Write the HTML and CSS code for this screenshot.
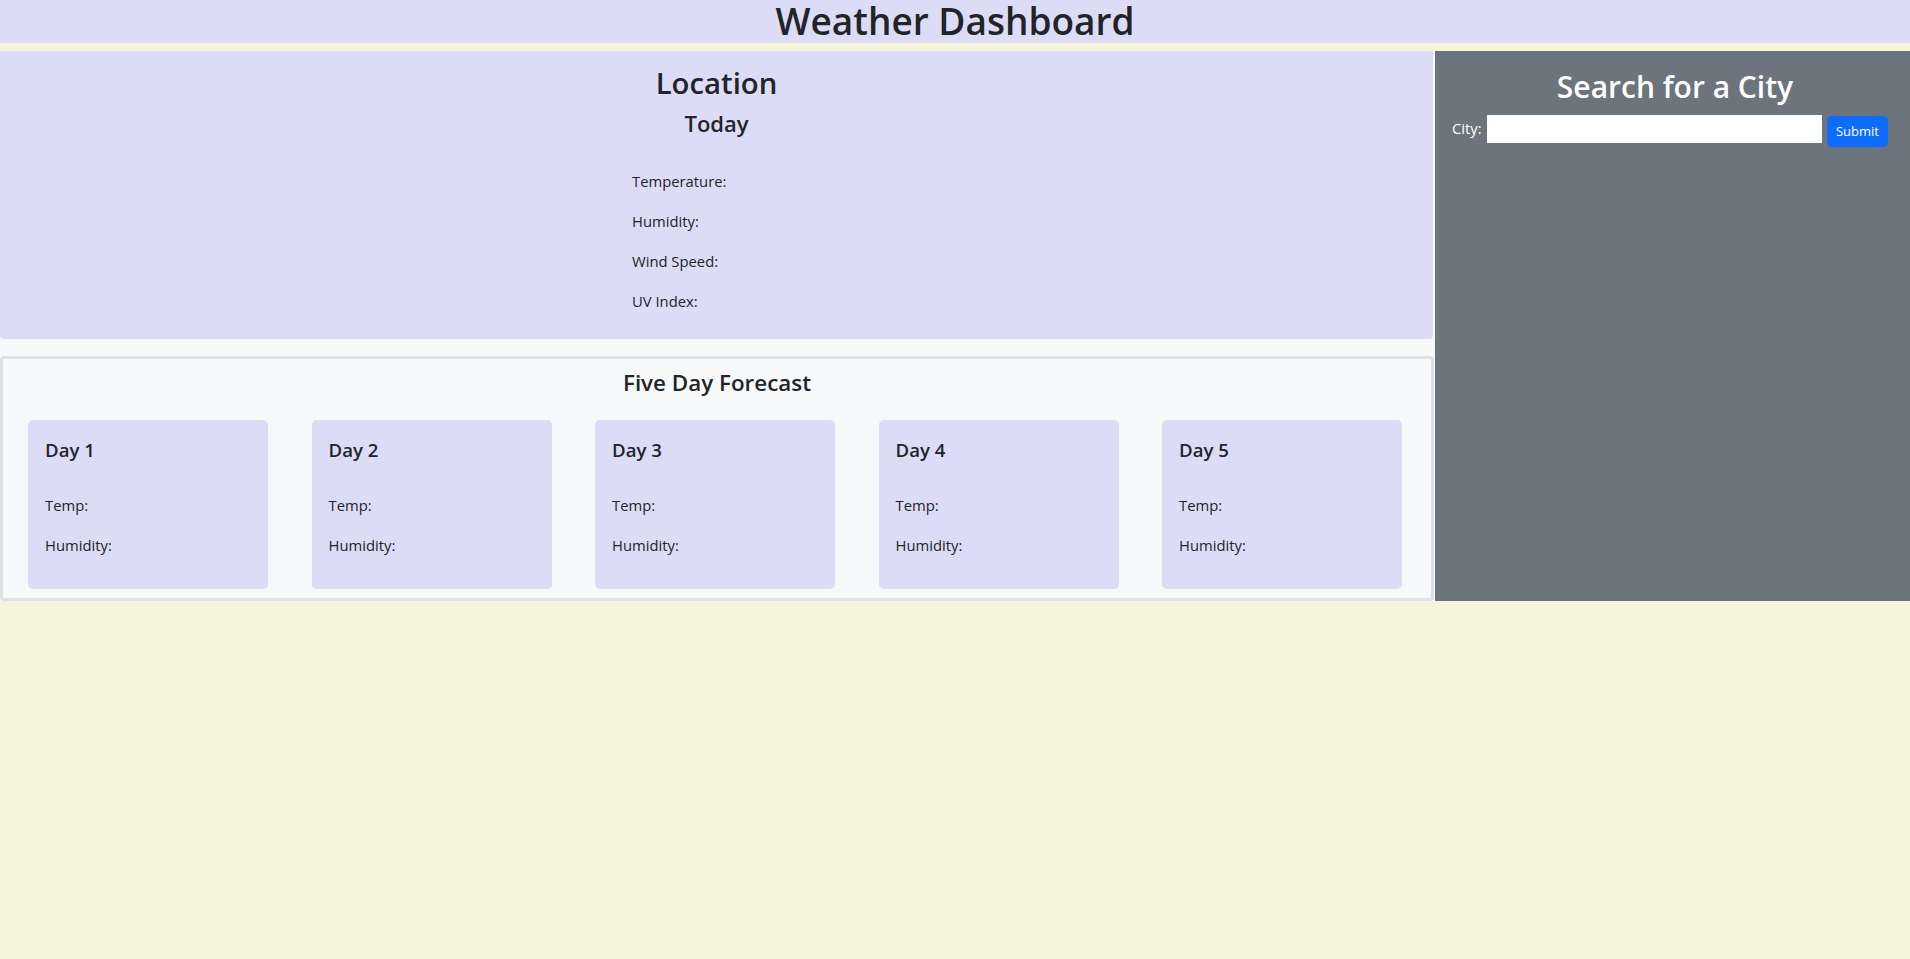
FILE: index.html
```html
<!DOCTYPE html>
<html lang="en">
<head>
<meta charset="utf-8">
<title>Weather Dashboard</title>
<link rel="stylesheet" href="styles.css">
</head>
<body>
<header class="site-header">
  <h1 class="site-title">Weather Dashboard</h1>
</header>
<main class="layout">
  <section class="main-col">
    <div class="today-panel">
      <h2 class="location-title">Location</h2>
      <h4 class="today-title">Today</h4>
      <div class="stats">
        <p class="stat">Temperature:</p>
        <p class="stat">Humidity:</p>
        <p class="stat">Wind Speed:</p>
        <p class="stat">UV Index:</p>
      </div>
    </div>
    <div class="forecast">
      <h4 class="forecast-title">Five Day Forecast</h4>
      <div class="cards">
        <div class="card"><h5 class="card-title">Day 1</h5><p class="stat">Temp:</p><p class="stat">Humidity:</p></div>
        <div class="card"><h5 class="card-title">Day 2</h5><p class="stat">Temp:</p><p class="stat">Humidity:</p></div>
        <div class="card"><h5 class="card-title">Day 3</h5><p class="stat">Temp:</p><p class="stat">Humidity:</p></div>
        <div class="card"><h5 class="card-title">Day 4</h5><p class="stat">Temp:</p><p class="stat">Humidity:</p></div>
        <div class="card"><h5 class="card-title">Day 5</h5><p class="stat">Temp:</p><p class="stat">Humidity:</p></div>
      </div>
    </div>
  </section>
  <aside class="sidebar">
    <h2 class="sidebar-title">Search for a City</h2>
    <form class="search-form">
      <label class="city-label" for="city">City:</label>
      <input class="city-input" id="city" type="text">
      <button class="submit-btn" type="button">Submit</button>
    </form>
  </aside>
</main>
</body>
</html>
```

FILE: styles.css
```css
* { box-sizing: border-box; }

body {
  margin: 0;
  background: #f5f5dc;
  color: #212529;
  font-family: "Open Sans", "Noto Sans", sans-serif;
  font-size: 14.8px;
  line-height: 1.5;
}

h1, h2, h4, h5, p { margin: 0; }

.site-header {
  height: 43px;
  background: #dddcf6;
  text-align: center;
  margin-bottom: 8px;
}

.site-title {
  font-size: 37px;
  font-weight: 600;
  line-height: 41px;
}

.layout {
  display: grid;
  grid-template-columns: 1435px 1fr;
}

.main-col {
  background: #f8f9fa;
}

.today-panel {
  background: #dddcf6;
  height: 288px;
  border-radius: 0 0 4px 4px;
  padding-top: 12.5px;
  text-align: center;
  margin-right: 2px;
  margin-bottom: 17px;
}

.location-title {
  font-size: 29.3px;
  font-weight: 600;
  line-height: 38.4px;
  margin-bottom: 7.5px;
}

.today-title {
  font-size: 22px;
  font-weight: 600;
  line-height: 28.8px;
  margin-bottom: 31.1px;
}

.stats {
  width: 169px;
  margin: 0 auto;
  text-align: left;
}

.stat {
  font-size: 14.8px;
  line-height: 24px;
  margin-bottom: 16px;
}

.forecast {
  border: 3px solid #dee2e6;
  border-radius: 4px;
  padding: 10px 0 9px;
  margin-right: 1px;
}

.forecast-title {
  text-align: center;
  font-size: 22.4px;
  font-weight: 600;
  line-height: 28.8px;
  margin-bottom: 22.2px;
}

.cards {
  display: grid;
  grid-template-columns: repeat(5, 240px);
  column-gap: 43.5px;
  padding-left: 25px;
}

.card {
  background: #dddcf6;
  border-radius: 5px;
  height: 169px;
  padding: 17.8px 16px 0 17px;
}

.card-title {
  font-size: 18.6px;
  font-weight: 600;
  line-height: 24px;
  margin-bottom: 31px;
}

.sidebar {
  background: #6c757d;
  padding: 17.3px 22px 0 17px;
  color: #fff;
}

.sidebar-title {
  text-align: center;
  font-size: 30px;
  font-weight: 600;
  line-height: 38.4px;
  margin: 0 -22px 8px -17px;
  padding-left: 5px;
}

.search-form {
  display: flex;
  align-items: flex-start;
}

.city-label {
  font-size: 14.8px;
  line-height: 24px;
  margin-top: 1.5px;
  margin-right: 5px;
}

.city-input {
  flex: 1;
  height: 28px;
  border: 1px solid #fff;
  background: #fff;
  margin: 0 5px 0 0;
  padding: 0 4px;
  font: inherit;
}

.submit-btn {
  margin-top: 1px;
  height: 31px;
  padding: 4px 8px;
  border: 1px solid #0d6efd;
  border-radius: 4px;
  background: #0d6efd;
  color: #fff;
  font-family: inherit;
  font-size: 13px;
  line-height: 21px;
}
```
